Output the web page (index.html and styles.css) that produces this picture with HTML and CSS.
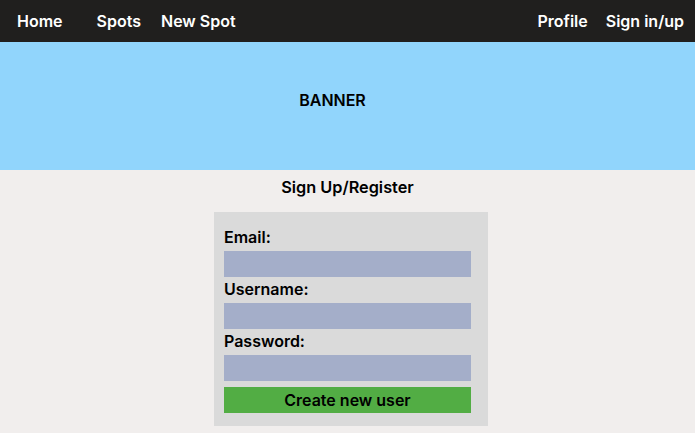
FILE: index.html
```html
<!DOCTYPE html>
<html lang="en">
<head>
<meta charset="utf-8">
<title>Sign Up</title>
<link rel="stylesheet" href="styles.css">
</head>
<body>
<nav class="topnav">
  <a class="navlink home" href="#">Home</a>
  <a class="navlink spots" href="#">Spots</a>
  <a class="navlink" href="#">New Spot</a>
  <span class="spacer"></span>
  <a class="navlink" href="#">Profile</a>
  <a class="navlink" href="#">Sign in/up</a>
</nav>
<header class="banner">BANNER</header>
<main class="content">
  <h1 class="title">Sign Up/Register</h1>
  <form class="signup">
    <label class="field-label" for="email">Email:</label>
    <input class="field" id="email" type="text">
    <label class="field-label" for="username">Username:</label>
    <input class="field" id="username" type="text">
    <label class="field-label" for="password">Password:</label>
    <input class="field" id="password" type="password">
    <button class="submit" type="button">Create new user</button>
  </form>
</main>
</body>
</html>
```
FILE: styles.css
```css
html, body {
  margin: 0;
  padding: 0;
}
body {
  background: #f1eeed;
  font-family: Inter, "Noto Sans", sans-serif;
  color: #000;
}
.topnav {
  display: flex;
  align-items: center;
  height: 42px;
  background: #201f1e;
  padding: 0 2px 0 8px;
  box-sizing: border-box;
}
.navlink {
  color: #ffffff;
  text-decoration: none;
  font-size: 16px;
  font-weight: 600;
  padding: 0 9px;
  line-height: 42px;
}
.navlink.home {
  margin-right: 16px;
}
.navlink.spots {
  padding-right: 11px;
}
.spacer {
  flex: 1;
}
.banner {
  height: 128px;
  box-sizing: border-box;
  background: #91d5fc;
  display: flex;
  align-items: center;
  justify-content: center;
  padding: 0 30px 12px 0;
  font-size: 16px;
  font-weight: 600;
}
.content {
  display: flex;
  flex-direction: column;
  align-items: center;
}
.title {
  margin: 7px 0 15px;
  font-size: 16.3px;
  line-height: 20px;
  font-weight: 600;
}
.signup {
  width: 274px;
  box-sizing: border-box;
  background: #dadada;
  margin-left: 7px;
  padding: 15px 17px 13px 10px;
  display: flex;
  flex-direction: column;
}
.field-label {
  font-size: 16px;
  font-weight: 600;
  line-height: 20px;
  margin-bottom: 4px;
}
.field {
  height: 26px;
  border: none;
  background: #a4aec9;
  margin: 0 0 2px;
  padding: 0;
  width: 100%;
  outline: none;
}
.submit {
  margin-top: 4px;
  height: 26px;
  border: none;
  background: #52ad44;
  font-family: Inter, "Noto Sans", sans-serif;
  font-size: 16px;
  font-weight: 600;
  color: #000;
  padding: 0;
}
```
